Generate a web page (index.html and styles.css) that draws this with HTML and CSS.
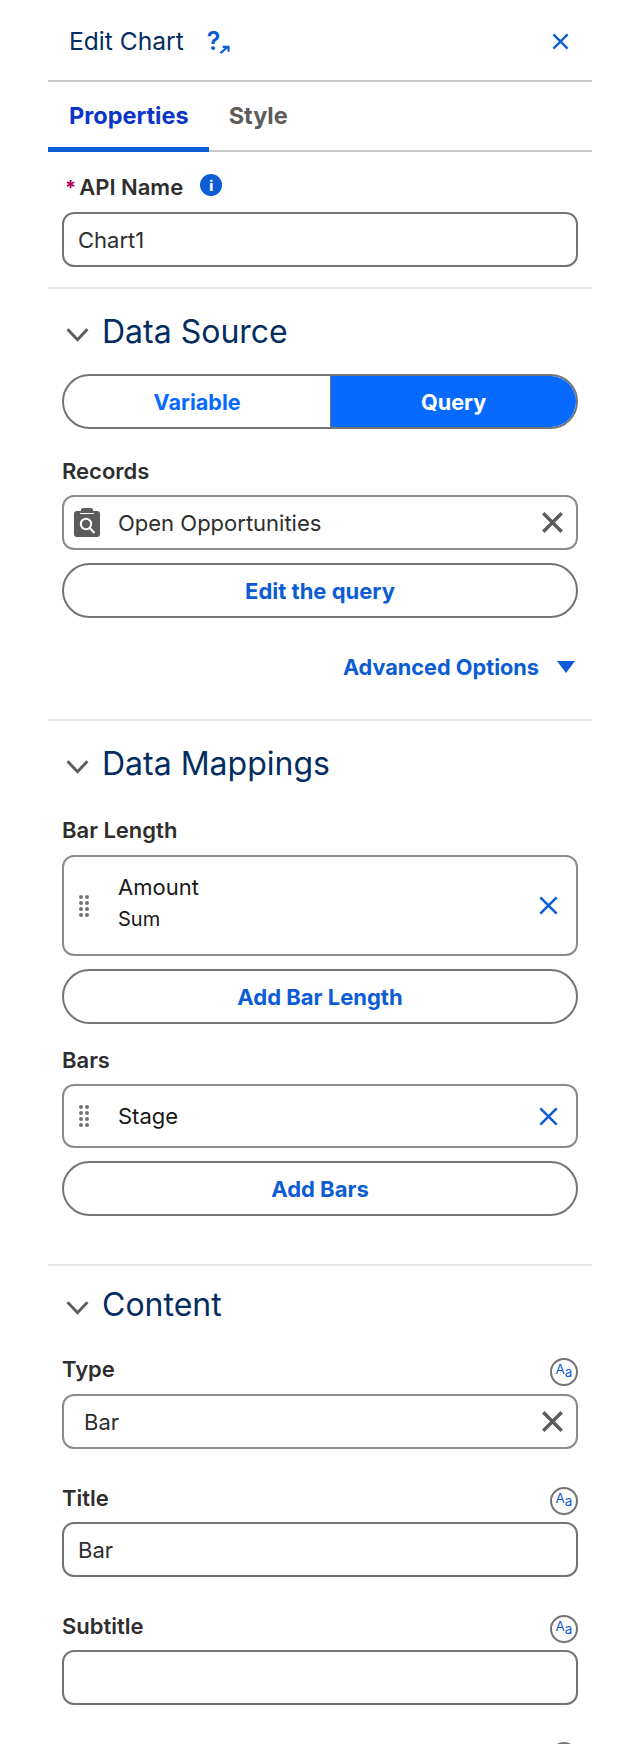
FILE: index.html
```html
<!DOCTYPE html>
<html lang="en">
  <head>
    <meta charset="UTF-8" />
    <meta name="viewport" content="width=device-width, initial-scale=1.0" />
    <title>Edit Chart</title>
    <link rel="stylesheet" href="styles.css">
  </head>
  <body>
    <div class="panel">
      <div class="panel-header">
        <span class="panel-title">Edit Chart</span>
        <span class="help-icon">
          <span class="help-mark">?</span>
          <svg class="help-arrow" viewBox="0 0 12 10"><path d="M1.5 9 9 2.5M4 2h6.5V7.5" /></svg>
        </span>
        <svg class="close-icon" viewBox="0 0 16 16"><path d="M2 2 14 14M14 2 2 14" /></svg>
      </div>

      <div class="tabs">
        <div class="tab tab-active">Properties</div>
        <div class="tab">Style</div>
      </div>

      <div class="section section-api">
        <div class="label-row label-row-api">
          <span class="required">*</span>
          <span class="label">API Name</span>
          <span class="info-icon">i</span>
        </div>
        <div class="input">Chart1</div>
      </div>

      <div class="section section-source">
        <div class="section-head">
          <svg class="chevron" viewBox="0 0 22 14"><path d="M1.5 2 11 12 20.5 2" /></svg>
          <h2>Data Source</h2>
        </div>
        <div class="toggle">
          <div class="toggle-option toggle-off">Variable</div>
          <div class="toggle-option toggle-on">Query</div>
        </div>
        <div class="label label-records">Records</div>
        <div class="input input-pill">
          <svg class="query-icon" viewBox="0 0 26 29">
            <path class="query-body" d="M3 3h4V2a2 2 0 0 1 2-2h8a2 2 0 0 1 2 2v1h4a3 3 0 0 1 3 3v20a3 3 0 0 1-3 3H3a3 3 0 0 1-3-3V6a3 3 0 0 1 3-3Z" />
            <path class="query-gap" d="M6 5.5h14" />
            <circle class="query-lens" cx="12" cy="16" r="5.2" />
            <path class="query-lens" d="M15.8 20 20.5 25" />
          </svg>
          <span class="input-text">Open Opportunities</span>
          <svg class="clear-icon" viewBox="0 0 20 20"><path d="M2 2 18 18M18 2 2 18" /></svg>
        </div>
        <button class="pill-button">Edit the query</button>
        <div class="advanced">
          <span>Advanced Options</span>
          <span class="triangle"></span>
        </div>
      </div>

      <div class="section section-mappings">
        <div class="section-head">
          <svg class="chevron" viewBox="0 0 22 14"><path d="M1.5 2 11 12 20.5 2" /></svg>
          <h2>Data Mappings</h2>
        </div>
        <div class="label label-bar-length">Bar Length</div>
        <div class="mapping mapping-tall">
          <div class="drag-dots"><i></i><i></i><i></i><i></i><i></i><i></i><i></i><i></i></div>
          <div class="mapping-text mapping-text-tall">
            <div>Amount</div>
            <div class="mapping-sub">Sum</div>
          </div>
          <svg class="remove-icon" viewBox="0 0 18 18"><path d="M2 2 16 16M16 2 2 16" /></svg>
        </div>
        <button class="pill-button">Add Bar Length</button>
        <div class="label label-bars">Bars</div>
        <div class="mapping">
          <div class="drag-dots"><i></i><i></i><i></i><i></i><i></i><i></i><i></i><i></i></div>
          <div class="mapping-text">
            <div>Stage</div>
          </div>
          <svg class="remove-icon" viewBox="0 0 18 18"><path d="M2 2 16 16M16 2 2 16" /></svg>
        </div>
        <button class="pill-button">Add Bars</button>
      </div>

      <div class="section section-content">
        <div class="section-head">
          <svg class="chevron" viewBox="0 0 22 14"><path d="M1.5 2 11 12 20.5 2" /></svg>
          <h2>Content</h2>
        </div>

        <div class="label-row label-row-type">
          <span class="label">Type</span>
          <span class="aa-icon"><span>A</span><span class="aa-small">a</span></span>
        </div>
        <div class="input input-pill input-type">
          <span class="input-text">Bar</span>
          <svg class="clear-icon" viewBox="0 0 20 20"><path d="M2 2 18 18M18 2 2 18" /></svg>
        </div>

        <div class="label-row label-row-next">
          <span class="label">Title</span>
          <span class="aa-icon"><span>A</span><span class="aa-small">a</span></span>
        </div>
        <div class="input">Bar</div>

        <div class="label-row label-row-next">
          <span class="label">Subtitle</span>
          <span class="aa-icon"><span>A</span><span class="aa-small">a</span></span>
        </div>
        <div class="input"></div>

        <div class="label-row label-row-last">
          <span></span>
          <span class="aa-icon"></span>
        </div>
      </div>
    </div>
  </body>
</html>
```

FILE: styles.css
```css
html, body {
  margin: 0;
  height: 1744px;
  overflow: hidden;
  background-color: white;
}
body {
  font-family: Inter, "Liberation Sans", sans-serif;
  color: #2e2e2e;
}
.panel {
  margin: 0 48px;
}

/* header and tabs */
.panel-header {
  display: flex;
  align-items: center;
  height: 78px;
  padding: 2px 22px 0 21px;
  border-bottom: 2px solid #c9c9c9;
}
.panel-title {
  font-size: 24.6px;
  color: #032d60;
}
.help-icon {
  display: flex;
  align-items: flex-end;
  margin-left: 23px;
  color: #0b5cd5;
}
.help-mark {
  font-size: 25px;
  font-weight: 600;
  line-height: 28px;
}
.help-arrow {
  width: 11px;
  height: 9px;
  margin-left: -1px;
  margin-bottom: 1px;
  fill: none;
  stroke: #0b5cd5;
  stroke-width: 2.4;
}
.close-icon {
  width: 19px;
  height: 19px;
  margin-left: auto;
  fill: none;
  stroke: #0b5cd5;
  stroke-width: 2;
}
.tabs {
  display: flex;
  height: 68px;
  border-bottom: 2px solid #c9c9c9;
}
.tab {
  padding: 19px 20px 0;
  font-size: 23.5px;
  font-weight: 700;
  color: #5c5c5c;
}
.tab-active {
  padding-left: 21px;
  color: #0b35c9;
  border-bottom: 5px solid #0b5cd5;
  margin-bottom: -2px;
}

/* sections */
.section {
  padding: 0 14px;
  border-bottom: 2px solid #e5e5e5;
}
.section-api {
  height: 135px;
}
.section-source {
  height: 430px;
}
.section-mappings {
  height: 543px;
}
.section-content {
  border-bottom: none;
}
.section-content .section-head {
  padding-top: 18px;
}
.section-head {
  display: flex;
  align-items: center;
  height: 40px;
  padding-left: 4px;
  padding-top: 22px;
}
.section-head h2 {
  margin: 0 0 0 13px;
  font-size: 32px;
  font-weight: 400;
  color: #032d60;
}
.chevron {
  width: 23px;
  height: 15px;
  margin-top: 6px;
  fill: none;
  stroke: #5c5c5c;
  stroke-width: 2.8;
}

/* labels */
.label {
  font-size: 22px;
  font-weight: 600;
  line-height: 26px;
  color: #2e2e2e;
}
.label-row {
  display: flex;
  align-items: center;
  justify-content: space-between;
}
.label-row .label {
  margin-bottom: 2px;
}
.label-row-api {
  justify-content: flex-start;
  padding: 22px 0 10px 3px;
}
.required {
  margin-right: 3px;
  font-size: 20px;
  font-weight: 700;
  color: #b60554;
}
.info-icon {
  display: flex;
  align-items: center;
  justify-content: center;
  width: 22px;
  height: 22px;
  margin-left: 17px;
  margin-bottom: 6px;
  border-radius: 50%;
  background-color: #0b5cd5;
  color: white;
  font-size: 14px;
  font-weight: 800;
}
.label-row-type {
  height: 28px;
  margin-top: 32px;
  margin-bottom: 10px;
}
.label-row-next {
  height: 28px;
  margin-top: 36px;
  margin-bottom: 9px;
}
.label-row-last {
  margin-top: 33px;
}
.label-records {
  margin-top: 29px;
  margin-bottom: 11px;
}
.label-bar-length {
  margin-top: 34px;
  margin-bottom: 12px;
}
.label-bars {
  margin-top: 23px;
  margin-bottom: 11px;
}

/* inputs and buttons */
.input {
  display: flex;
  align-items: center;
  box-sizing: border-box;
  height: 55px;
  padding: 0 14px;
  border: 2px solid #747474;
  border-radius: 12px;
  font-size: 22px;
  color: #2e2e2e;
}
.input-pill {
  padding: 0 12px 0 10px;
  border-color: #8c8c8c;
}
.input-type {
  padding-left: 20px;
}
.input-text {
  flex: 1;
}
.query-icon {
  width: 26px;
  height: 29px;
  margin-right: 18px;
}
.query-body {
  fill: #5c5c5c;
}
.query-gap {
  stroke: white;
  stroke-width: 1;
}
.query-lens {
  fill: none;
  stroke: white;
  stroke-width: 2;
}
.clear-icon {
  width: 23px;
  height: 23px;
  fill: none;
  stroke: #5c5c5c;
  stroke-width: 3;
}
.toggle {
  display: flex;
  box-sizing: border-box;
  height: 55px;
  margin-top: 23px;
  border: 2px solid #747474;
  border-radius: 28px;
  overflow: hidden;
}
.toggle-option {
  display: flex;
  align-items: center;
  justify-content: center;
  font-size: 21.6px;
  font-weight: 700;
  color: #066afe;
}
.toggle-off {
  width: 52%;
  border-right: 1px solid #747474;
}
.toggle-on {
  flex: 1;
  background-color: #066afe;
  color: white;
}
.pill-button {
  display: block;
  box-sizing: border-box;
  width: 100%;
  height: 55px;
  margin-top: 13px;
  padding: 0;
  border: 2px solid #747474;
  border-radius: 28px;
  background-color: white;
  font-family: Inter, "Liberation Sans", sans-serif;
  font-size: 22px;
  font-weight: 700;
  color: #0b5cd5;
}
.advanced {
  display: flex;
  align-items: center;
  justify-content: flex-end;
  margin-top: 36px;
  padding-right: 3px;
  font-size: 21.7px;
  font-weight: 700;
  color: #0b5cd5;
}
.triangle {
  width: 0;
  height: 0;
  margin-left: 18px;
  border-left: 9px solid transparent;
  border-right: 9px solid transparent;
  border-top: 12px solid #0b5cd5;
}

/* mapped fields */
.mapping {
  display: flex;
  align-items: center;
  box-sizing: border-box;
  height: 64px;
  padding: 0 17px 0 15px;
  border: 2px solid #8c8c8c;
  border-radius: 12px;
  font-size: 22px;
  color: #181818;
}
.mapping-tall {
  height: 101px;
}
.drag-dots {
  display: grid;
  grid-template-columns: 4px 4px;
  grid-auto-rows: 4px;
  gap: 2px;
  margin-right: 29px;
}
.drag-dots i {
  border-radius: 50%;
  background-color: #747474;
}
.mapping-text {
  flex: 1;
}
.mapping-text-tall {
  margin-bottom: 7px;
}
.mapping-sub {
  margin-top: 7px;
  font-size: 20px;
}
.remove-icon {
  width: 21px;
  height: 21px;
  fill: none;
  stroke: #0b5cd5;
  stroke-width: 2.2;
}

/* Aa badge */
.aa-icon {
  display: flex;
  align-items: baseline;
  justify-content: center;
  box-sizing: border-box;
  width: 28px;
  height: 28px;
  margin-top: 4px;
  padding-top: 3px;
  border: 2px solid #747474;
  border-radius: 50%;
  font-size: 13.5px;
  line-height: 12px;
  color: #0b5cd5;
}
.aa-small {
  font-size: 13.5px;
  position: relative;
  top: 3px;
}
```
